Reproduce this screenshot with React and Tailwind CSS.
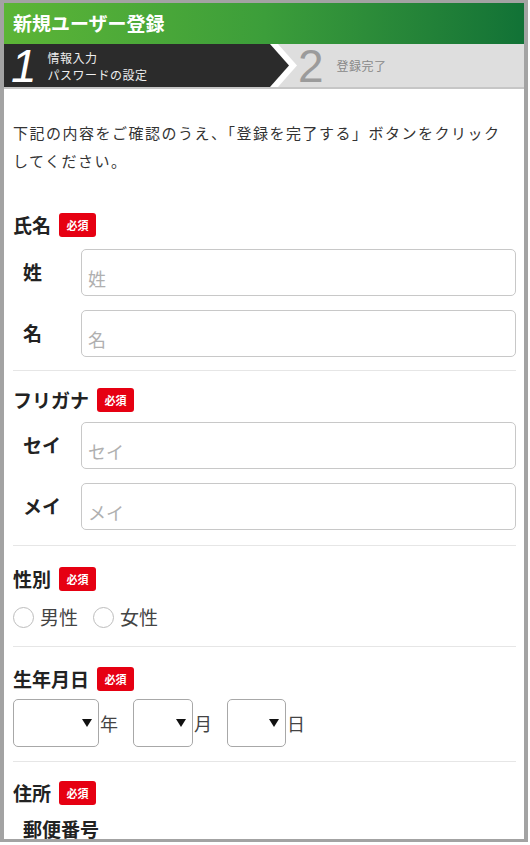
import React from 'react'

const font = { fontFamily: '"Noto Sans CJK JP", "Noto Sans", sans-serif' }

function Badge() {
  return (
    <span className="ml-[8px] inline-flex h-[24px] w-[37px] items-center justify-center rounded-[3px] bg-[#e60012] text-[11px] font-bold leading-none text-white">
      必須
    </span>
  )
}

function Heading({ children, className = '' }) {
  return (
    <div className={`flex h-[24px] items-center text-[19px] font-bold leading-[24px] text-[#222] ${className}`}>
      {children}
      <Badge />
    </div>
  )
}

function FieldRow({ label, className = '' }) {
  return (
    <div className={`flex items-center ${className}`}>
      <div className="w-[68px] pl-[10px] text-[19px] font-bold text-[#222]">{label}</div>
      <input
        type="text"
        placeholder={label}
        className="h-[47px] flex-1 rounded-[5px] border border-[#c8c8c8] bg-white px-[6px] pt-[10px] text-[18px] text-[#333] outline-none placeholder:text-[#b0b0b0]"
      />
    </div>
  )
}

function Radio({ label }) {
  return (
    <label className="flex items-center">
      <span className="h-[21px] w-[21px] rounded-full border-[1.5px] border-[#bdbdbd] bg-white" />
      <span className="ml-[6px] text-[19px] leading-[22px] text-[#444]">{label}</span>
    </label>
  )
}

function SelectBox({ width, unit }) {
  return (
    <div className="flex items-center">
      <div className={`flex h-[48px] items-center justify-end rounded-[5px] border-[1.5px] border-[#a8a8a8] bg-white pr-[6px] ${width}`}>
        <svg width="10" height="8" viewBox="0 0 10 8">
          <polygon points="0,0 10,0 5,8" fill="#111" />
        </svg>
      </div>
      <span className="ml-[1px] text-[18px] text-[#444]">{unit}</span>
    </div>
  )
}

function Divider({ className = '' }) {
  return <div className={`h-px bg-[#e6e6e6] ${className}`} />
}

export default function App() {
  return (
    <div className="h-[845px] w-[530px] bg-white" style={font}>
      <div className="flex h-[842px] w-[528px] flex-col overflow-hidden border-t-[3px] border-r-4 border-b-[3px] border-l-4 border-[#a3a3a3] bg-white">
        {/* Header */}
        <div className="flex h-[41px] shrink-0 items-center bg-linear-to-r from-[#5cb536] via-[#3c9e3a] to-[#117236] pl-[9px]">
          <h1 className="text-[19px] font-bold text-white">新規ユーザー登録</h1>
        </div>

        {/* Steps */}
        <div className="flex h-[45px] shrink-0 border-b-2 border-[#c6c6c6] bg-[#dedede]">
          <div className="flex w-[266px] items-center bg-[#2b2b2b] pl-[7px]">
            <span
              className="text-[46px] font-medium italic leading-none text-white"
              style={{ fontFamily: '"Liberation Sans", sans-serif' }}
            >
              1
            </span>
            <div className="ml-[11px] text-[12px] leading-[17px] tracking-[0.5px] text-[#eee]">
              <div>情報入力</div>
              <div>パスワードの設定</div>
            </div>
          </div>
          <svg width="28" height="43" viewBox="0 0 28 43" className="shrink-0">
            <polygon points="0,0 8,0 27,21.5 8,43 0,43" fill="#ffffff" />
            <polygon points="0,0 19,21.5 0,43" fill="#2b2b2b" />
          </svg>
          <div className="flex flex-1 items-center">
            <span
              className="text-[46px] leading-none text-[#9b9b9b]"
              style={{ fontFamily: '"Liberation Sans", sans-serif' }}
            >
              2
            </span>
            <span className="ml-[13px] text-[12px] tracking-[0.5px] text-[#888]">登録完了</span>
          </div>
        </div>

        {/* Form */}
        <div className="flex flex-col pr-[8px] pl-[9px]">
          <p className="mt-[30px] text-[15px] leading-[28px] tracking-[1.5px] text-[#333]">
            下記の内容をご確認のうえ、「登録を完了する」ボタンをクリック
            <br />
            してください。
          </p>

          <Heading className="mt-[38px]">氏名</Heading>
          <FieldRow label="姓" className="mt-[12px]" />
          <FieldRow label="名" className="mt-[14px]" />
          <Divider className="mt-[13px]" />

          <Heading className="mt-[17px]">フリガナ</Heading>
          <FieldRow label="セイ" className="mt-[10px]" />
          <FieldRow label="メイ" className="mt-[14px]" />
          <Divider className="mt-[15px]" />

          <Heading className="mt-[21px]">性別</Heading>
          <div className="mt-[15px] flex items-center gap-[15px]">
            <Radio label="男性" />
            <Radio label="女性" />
          </div>
          <Divider className="mt-[18px]" />

          <Heading className="mt-[20px]">生年月日</Heading>
          <div className="mt-[8px] flex items-center gap-[15px]">
            <SelectBox width="w-[86px]" unit="年" />
            <SelectBox width="w-[60px]" unit="月" />
            <SelectBox width="w-[59px]" unit="日" />
          </div>
          <Divider className="mt-[14px]" />

          <Heading className="mt-[19px]">住所</Heading>
          <div className="mt-[12px] pl-[10px] text-[19px] font-bold leading-[24px] text-[#222]">郵便番号</div>
        </div>
      </div>
    </div>
  )
}
